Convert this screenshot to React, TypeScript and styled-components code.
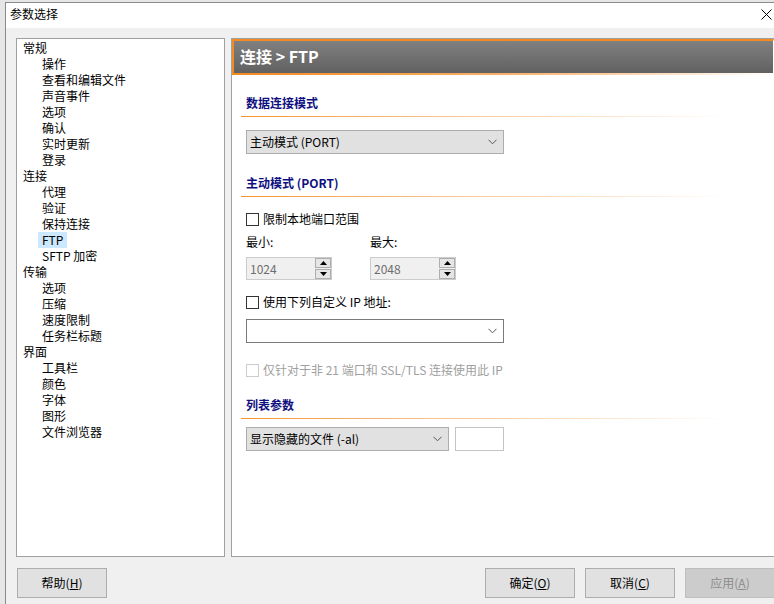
import React from "react";
import styled, { createGlobalStyle } from "styled-components";

const GlobalStyle = createGlobalStyle`
  html, body { margin: 0; padding: 0; }
  body {
    background: #e6e6e6;
    font-family: "Noto Sans CJK SC", "Noto Sans", sans-serif;
    font-size: 12px;
    color: #000;
  }
  * { box-sizing: border-box; }
`;

const Desktop = styled.div`
  width: 774px;
  height: 604px;
  overflow: hidden;
  padding: 2px 0 0 5px;
`;

const Window = styled.div`
  height: 610px;
  background: #f0f0f0;
  border-left: 1px solid #8a8a8a;
  border-top: 1px solid #8a8a8a;
  display: flex;
  flex-direction: column;
`;

const TitleBar = styled.div`
  height: 25px;
  background: #fff;
  display: flex;
  align-items: center;
  justify-content: space-between;
  padding: 0 0 3px 4px;
  line-height: 16px;
`;

const CloseBtn = styled.div`
  width: 20px;
  height: 22px;
  display: flex;
  align-items: center;
  justify-content: center;
  margin-right: -2px;
`;

const Body = styled.div`
  padding: 10px 0 0 10px;
  display: flex;
  flex-direction: column;
`;

const Main = styled.div`
  display: flex;
  gap: 6px;
  height: 519px;
`;

const Tree = styled.div`
  width: 209px;
  background: #fff;
  border: 1px solid #a0a0a0;
  padding-top: 1px;
`;

const TreeRow = styled.div<{ $level: number }>`
  height: 16px;
  line-height: 16px;
  padding-left: ${(p) => (p.$level === 0 ? 6 : 25)}px;
  white-space: nowrap;
`;

const TreeLabel = styled.span<{ $selected?: boolean }>`
  display: inline-block;
  padding: 0 4px;
  margin-left: -4px;
  background: ${(p) => (p.$selected ? "#cce8ff" : "transparent")};
`;

const Panel = styled.div`
  flex: 1;
  background: #fff;
  border: 1px solid #a0a0a0;
  border-right: none;
  display: flex;
  flex-direction: column;
`;

const Header = styled.div`
  height: 34px;
  border-top: 2px solid #f58a1f;
  border-left: 2px solid #f58a1f;
  border-right: 1px solid #fff;
  background: linear-gradient(#808080, #616161);
  display: flex;
  align-items: center;
  padding: 0 0 3px 6px;
  color: #fff;
  font-weight: bold;
  font-size: 16px;
`;

const HeaderRule = styled.div`
  height: 2px;
  background: linear-gradient(to right, #f58a1f 0%, #f8b06a 50%, #ffffff 100%);
`;

const Content = styled.div`
  display: flex;
  flex-direction: column;
  padding-left: 9px;
`;

const SectionTitle = styled.div<{ $mt: number }>`
  margin-top: ${(p) => p.$mt}px;
  margin-right: 46px;
  padding: 0 0 5px 5px;
  line-height: 16px;
  font-weight: bold;
  color: #0f0f80;
  border-bottom: 1px solid transparent;
  border-image: linear-gradient(to right, #f5932e 0%, #f8c18c 40%, rgba(255, 255, 255, 0) 100%) 1;
`;

const Indent = styled.div<{ $mt: number }>`
  margin-top: ${(p) => p.$mt}px;
  padding-left: 5px;
  display: flex;
  align-items: center;
`;

const Select = styled.div<{ $width: number; $editable?: boolean }>`
  width: ${(p) => p.$width}px;
  height: 24px;
  background: ${(p) => (p.$editable ? "#fff" : "#e1e1e1")};
  border: 1px solid ${(p) => (p.$editable ? "#7a7a7a" : "#adadad")};
  display: flex;
  align-items: center;
  justify-content: space-between;
  padding: 0 6px 0 3px;
  line-height: 16px;
`;

const SmallInput = styled.div`
  width: 49px;
  height: 24px;
  margin-left: 6px;
  background: #fff;
  border: 1px solid #c4c4c4;
`;

const CheckRow = styled.label<{ $disabled?: boolean }>`
  display: flex;
  align-items: center;
  gap: 4px;
  height: 16px;
  line-height: 16px;
  color: ${(p) => (p.$disabled ? "#a0a0a0" : "#000")};
`;

const Box = styled.span<{ $disabled?: boolean }>`
  width: 13px;
  height: 13px;
  border: 1px solid ${(p) => (p.$disabled ? "#cccccc" : "#333333")};
  background: #fff;
  display: inline-block;
`;

const Pair = styled.div`
  display: flex;
  flex-direction: column;
  gap: 7px;
  width: 124px;
`;

const FieldLabel = styled.div`
  line-height: 16px;
  height: 16px;
`;

const Spinner = styled.div`
  width: 86px;
  height: 23px;
  border: 1px solid #cccccc;
  background: #f0f0f0;
  display: flex;
  align-items: center;
  justify-content: space-between;
  padding: 0 0 0 3px;
  color: #6d6d6d;
  line-height: 16px;
`;

const SpinCol = styled.div`
  display: flex;
  flex-direction: column;
  gap: 1px;
  width: 16px;
`;

const SpinBtn = styled.div`
  height: 10px;
  border: 1px solid #adadad;
  background: #e6e6e6;
  display: flex;
  align-items: center;
  justify-content: center;
`;

const Footer = styled.div`
  margin-top: 11px;
  display: flex;
  justify-content: space-between;
  padding-left: 1px;
`;

const BtnGroup = styled.div`
  display: flex;
  gap: 10px;
  margin-right: -1px;
`;

const Button = styled.button<{ $disabled?: boolean }>`
  width: 90px;
  height: 30px;
  font-family: inherit;
  font-size: 12px;
  line-height: 16px;
  padding: 0;
  background: ${(p) => (p.$disabled ? "#cccccc" : "#e1e1e1")};
  border: 1px solid ${(p) => (p.$disabled ? "#bfbfbf" : "#adadad")};
  color: ${(p) => (p.$disabled ? "#8c8c8c" : "#000")};
`;

const Chevron = () => (
  <svg width="9" height="6" viewBox="0 0 9 6">
    <polyline points="0.5,0.8 4.5,4.8 8.5,0.8" fill="none" stroke="#555" strokeWidth="1" />
  </svg>
);

const Up = () => (
  <svg width="7" height="4" viewBox="0 0 7 4">
    <polygon points="3.5,0 7,4 0,4" fill="#000" />
  </svg>
);
const Down = () => (
  <svg width="7" height="4" viewBox="0 0 7 4">
    <polygon points="0,0 7,0 3.5,4" fill="#000" />
  </svg>
);

const tree: { label: string; level: number; selected?: boolean }[] = [
  { label: "常规", level: 0 },
  { label: "操作", level: 1 },
  { label: "查看和编辑文件", level: 1 },
  { label: "声音事件", level: 1 },
  { label: "选项", level: 1 },
  { label: "确认", level: 1 },
  { label: "实时更新", level: 1 },
  { label: "登录", level: 1 },
  { label: "连接", level: 0 },
  { label: "代理", level: 1 },
  { label: "验证", level: 1 },
  { label: "保持连接", level: 1 },
  { label: "FTP", level: 1, selected: true },
  { label: "SFTP 加密", level: 1 },
  { label: "传输", level: 0 },
  { label: "选项", level: 1 },
  { label: "压缩", level: 1 },
  { label: "速度限制", level: 1 },
  { label: "任务栏标题", level: 1 },
  { label: "界面", level: 0 },
  { label: "工具栏", level: 1 },
  { label: "颜色", level: 1 },
  { label: "字体", level: 1 },
  { label: "图形", level: 1 },
  { label: "文件浏览器", level: 1 },
];

const SpinField = ({ label, value }: { label: string; value: string }) => (
  <Pair>
    <FieldLabel>{label}</FieldLabel>
    <Spinner>
      <span>{value}</span>
      <SpinCol>
        <SpinBtn>
          <Up />
        </SpinBtn>
        <SpinBtn>
          <Down />
        </SpinBtn>
      </SpinCol>
    </Spinner>
  </Pair>
);

export default function App() {
  return (
    <>
      <GlobalStyle />
      <Desktop>
        <Window>
          <TitleBar>
            <span>参数选择</span>
            <CloseBtn>
              <svg width="11" height="11" viewBox="0 0 11 11">
                <path d="M0.5 0.5 L10.5 10.5 M10.5 0.5 L0.5 10.5" stroke="#000" strokeWidth="1" />
              </svg>
            </CloseBtn>
          </TitleBar>
          <Body>
            <Main>
              <Tree>
                {tree.map((t, i) => (
                  <TreeRow key={i} $level={t.level}>
                    <TreeLabel $selected={t.selected}>{t.label}</TreeLabel>
                  </TreeRow>
                ))}
              </Tree>
              <Panel>
                <Header>连接 &gt; FTP</Header>
                <HeaderRule />
                <Content>
                  <SectionTitle $mt={20}>数据连接模式</SectionTitle>
                  <Indent $mt={13}>
                    <Select $width={258}>
                      <span>主动模式 (PORT)</span>
                      <Chevron />
                    </Select>
                  </Indent>
                  <SectionTitle $mt={21}>主动模式 (PORT)</SectionTitle>
                  <Indent $mt={14}>
                    <CheckRow>
                      <Box />
                      限制本地端口范围
                    </CheckRow>
                  </Indent>
                  <Indent $mt={7}>
                    <SpinField label="最小:" value="1024" />
                    <SpinField label="最大:" value="2048" />
                  </Indent>
                  <Indent $mt={14}>
                    <CheckRow>
                      <Box />
                      使用下列自定义 IP 地址:
                    </CheckRow>
                  </Indent>
                  <Indent $mt={9}>
                    <Select $width={258} $editable>
                      <span />
                      <Chevron />
                    </Select>
                  </Indent>
                  <Indent $mt={19}>
                    <CheckRow $disabled>
                      <Box $disabled />
                      仅针对于非 21 端口和 SSL/TLS 连接使用此 IP
                    </CheckRow>
                  </Indent>
                  <SectionTitle $mt={19}>列表参数</SectionTitle>
                  <Indent $mt={8}>
                    <Select $width={203}>
                      <span>显示隐藏的文件 (-al)</span>
                      <Chevron />
                    </Select>
                    <SmallInput />
                  </Indent>
                </Content>
              </Panel>
            </Main>
            <Footer>
              <Button>
                帮助(<u>H</u>)
              </Button>
              <BtnGroup>
                <Button>
                  确定(<u>O</u>)
                </Button>
                <Button>
                  取消(<u>C</u>)
                </Button>
                <Button $disabled>
                  应用(<u>A</u>)
                </Button>
              </BtnGroup>
            </Footer>
          </Body>
        </Window>
      </Desktop>
    </>
  );
}
